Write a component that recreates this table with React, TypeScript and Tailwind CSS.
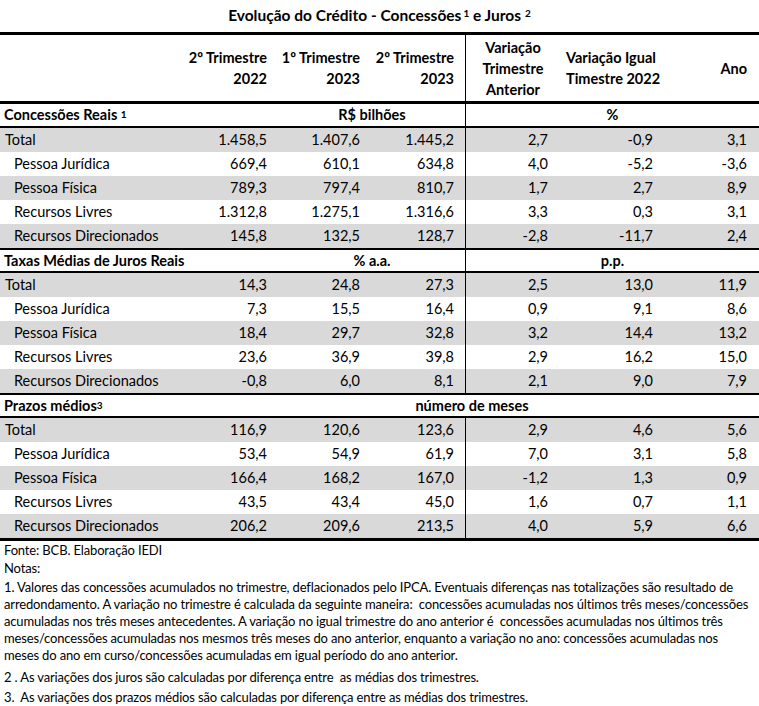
import React from 'react';

type Row = { label: string; values: string[]; sub?: boolean };

interface Section {
  title: React.ReactNode;
  unitLeft?: string;
  unitRight?: string;
  unitWide?: string;
  rows: Row[];
}

const sections: Section[] = [
  {
    title: (
      <>
        Concessões Reais <sup className="text-[10px] relative -top-[2px]">1</sup>
      </>
    ),
    unitLeft: 'R$ bilhões',
    unitRight: '%',
    rows: [
      { label: 'Total', values: ['1.458,5', '1.407,6', '1.445,2', '2,7', '-0,9', '3,1'] },
      { label: 'Pessoa Jurídica', sub: true, values: ['669,4', '610,1', '634,8', '4,0', '-5,2', '-3,6'] },
      { label: 'Pessoa Física', sub: true, values: ['789,3', '797,4', '810,7', '1,7', '2,7', '8,9'] },
      { label: 'Recursos Livres', sub: true, values: ['1.312,8', '1.275,1', '1.316,6', '3,3', '0,3', '3,1'] },
      { label: 'Recursos Direcionados', sub: true, values: ['145,8', '132,5', '128,7', '-2,8', '-11,7', '2,4'] },
    ],
  },
  {
    title: 'Taxas Médias de Juros Reais',
    unitLeft: '% a.a.',
    unitRight: 'p.p.',
    rows: [
      { label: 'Total', values: ['14,3', '24,8', '27,3', '2,5', '13,0', '11,9'] },
      { label: 'Pessoa Jurídica', sub: true, values: ['7,3', '15,5', '16,4', '0,9', '9,1', '8,6'] },
      { label: 'Pessoa Física', sub: true, values: ['18,4', '29,7', '32,8', '3,2', '14,4', '13,2'] },
      { label: 'Recursos Livres', sub: true, values: ['23,6', '36,9', '39,8', '2,9', '16,2', '15,0'] },
      { label: 'Recursos Direcionados', sub: true, values: ['-0,8', '6,0', '8,1', '2,1', '9,0', '7,9'] },
    ],
  },
  {
    title: (
      <>
        Prazos médios<sup className="text-[10px] relative -top-[2px]">3</sup>
      </>
    ),
    unitWide: 'número de meses',
    rows: [
      { label: 'Total', values: ['116,9', '120,6', '123,6', '2,9', '4,6', '5,6'] },
      { label: 'Pessoa Jurídica', sub: true, values: ['53,4', '54,9', '61,9', '7,0', '3,1', '5,8'] },
      { label: 'Pessoa Física', sub: true, values: ['166,4', '168,2', '167,0', '-1,2', '1,3', '0,9'] },
      { label: 'Recursos Livres', sub: true, values: ['43,5', '43,4', '45,0', '1,6', '0,7', '1,1'] },
      { label: 'Recursos Direcionados', sub: true, values: ['206,2', '209,6', '213,5', '4,0', '5,9', '6,6'] },
    ],
  },
];

const cols = 'grid grid-cols-[186px_93px_93px_93px_95px_105px_94px]';

const SectionHeader = ({ s, first }: { s: Section; first: boolean }) => (
  <div
    className={`${cols} items-center font-bold border-b-2 border-black ${
      first ? 'h-[24px]' : 'h-[25px] border-t-2'
    }`}
  >
    <div className="col-span-2 pl-1 whitespace-nowrap">{s.title}</div>
    {s.unitWide ? (
      <>
        <div className="col-span-4 text-center">{s.unitWide}</div>
        <div />
      </>
    ) : (
      <>
        <div className="col-span-2 text-center">{s.unitLeft}</div>
        <div className="col-span-3 h-full flex items-center justify-center border-l border-black">{s.unitRight}</div>
      </>
    )}
  </div>
);

const DataRow = ({ r, idx }: { r: Row; idx: number }) => (
  <div className={`${cols} h-[24px] items-center ${idx % 2 === 0 ? 'bg-[#d9d9d9]' : 'bg-white'}`}>
    <div className={r.sub ? 'pl-[14px]' : 'pl-[5px]'}>{r.label}</div>
    <div className="text-right pr-3">{r.values[0]}</div>
    <div className="text-right pr-3">{r.values[1]}</div>
    <div className="text-right pr-[11px]">{r.values[2]}</div>
    <div className="h-full flex items-center justify-end pr-3 border-l border-black">{r.values[3]}</div>
    <div className="text-right pr-3">{r.values[4]}</div>
    <div className="text-right pr-3">{r.values[5]}</div>
  </div>
);

export default function App() {
  return (
    <div
      className="w-[759px] h-[706px] bg-white text-black text-[14.5px] overflow-hidden"
      style={{ fontFamily: 'Lato, "Open Sans", sans-serif' }}
    >
      <div className="h-[32px] flex items-center justify-center font-bold text-[15.5px]">
        Evolução do Crédito - Concessões<sup className="text-[10px] relative -top-[3px] ml-[2px]">1</sup>&nbsp;e Juros
        <sup className="text-[10px] relative -top-[3px] ml-[4px]">2</sup>
      </div>

      <div className="border-t-[3px] border-b-[3px] border-black">
        <div className={`${cols} h-[66px] items-center font-bold leading-[21px]`}>
          <div />
          <div className="text-right pr-3">2º Trimestre<br />2022</div>
          <div className="text-right pr-3">1º Trimestre<br />2023</div>
          <div className="text-right pr-[11px]">2º Trimestre<br />2023</div>
          <div className="h-full flex items-center justify-center text-center border-l border-black">
            Variação<br />Trimestre<br />Anterior
          </div>
          <div className="pl-1.5">Variação Igual<br />Timestre 2022</div>
          <div className="text-right pr-3">Ano</div>
        </div>
      </div>

      <div className="border-b-[3px] border-black">
        {sections.map((s, si) => (
          <div key={si}>
            <SectionHeader s={s} first={si === 0} />
            {s.rows.map((r, ri) => (
              <DataRow key={ri} r={r} idx={ri} />
            ))}
          </div>
        ))}
      </div>

      <div className="pl-1 pt-[1px] text-[13px] tracking-[-0.15px] leading-[17px] whitespace-nowrap">
        <p>Fonte: BCB. Elaboração IEDI</p>
        <p className="mt-[1px]">Notas:</p>
        <p className="mt-[2px]">
          1. Valores das concessões acumulados no trimestre, deflacionados pelo IPCA. Eventuais diferenças nas totalizações são resultado de
          <br />
          arredondamento. A variação no trimestre é calculada da seguinte maneira:&nbsp; concessões acumuladas nos últimos três meses/concessões
          <br />
          acumuladas nos três meses antecedentes. A variação no igual trimestre do ano anterior é&nbsp; concessões acumuladas nos últimos três
          <br />
          meses/concessões acumuladas nos mesmos três meses do ano anterior, enquanto a variação no ano: concessões acumuladas nos
          <br />
          meses do ano em curso/concessões acumuladas em igual período do ano anterior.
        </p>
        <p className="mt-[5px]">2 . As variações dos juros são calculadas por diferença entre&nbsp; as médias dos trimestres.</p>
        <p className="mt-[3px]">3.&nbsp; As variações dos prazos médios são calculadas por diferença entre as médias dos trimestres.</p>
      </div>
    </div>
  );
}
